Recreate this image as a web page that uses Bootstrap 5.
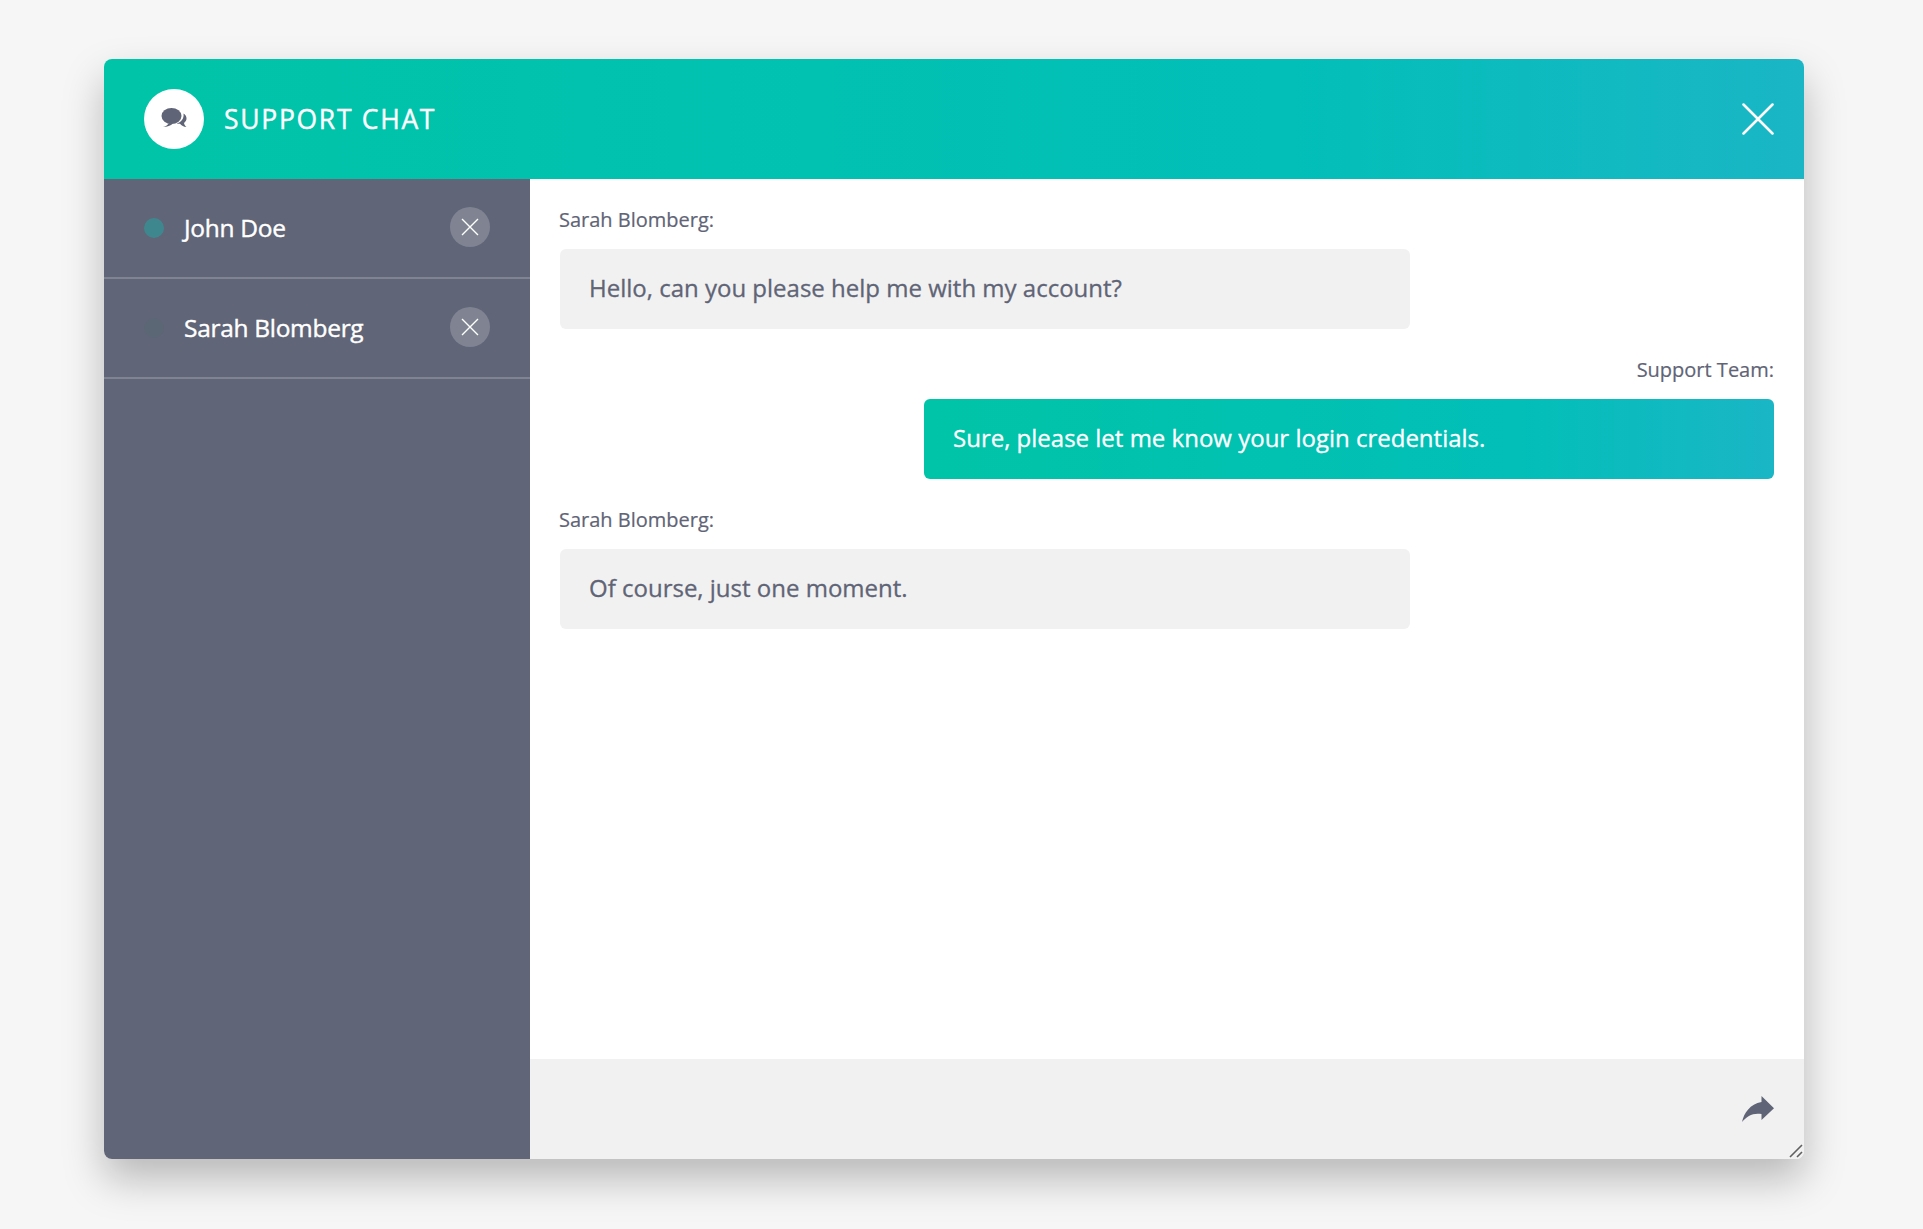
<!DOCTYPE html>
<html lang="en">
<head>
<meta charset="utf-8">
<title>Support Chat</title>
<link rel="stylesheet" href="https://cdn.jsdelivr.net/npm/bootstrap@5.3.0/dist/css/bootstrap.min.css">
<style>
html,body{height:100%}
body{background:#f6f6f6;font-family:"Open Sans","Liberation Sans",sans-serif;color:#5f6476;padding:59px 0 0 104px;overflow:hidden}
.chat-win{width:1700px;height:1100px;border-radius:8px;box-shadow:0 20px 40px rgba(0,0,0,.25);overflow:hidden;background:#fff;position:relative}
.chat-head{height:120px;padding:0 30px 0 40px;background:linear-gradient(90deg,#00c4a7 0%,#02bfb8 70%,#1ab6c6 100%);flex:none}
.head-logo{width:60px;height:60px;background:#fff;border-radius:50%}
.head-title{font-size:26.5px;letter-spacing:1.7px;margin-left:20px;color:#fff;line-height:1;-webkit-text-stroke:.4px #fff}
.chat-body{height:980px}
.chat-side{width:426px;background:#606577;flex:none}
.side-item{height:100px;border-bottom:2px solid #7f8392;padding:0 40px}
.side-dot{width:20px;height:20px;border-radius:50%;flex:none;margin-bottom:1px}
.dot-on{background:#3f878f}
.dot-off{background:#5b6775}
.side-name{font-size:24.5px;color:#fff;margin-left:20px;letter-spacing:-.3px;-webkit-text-stroke:.4px #fff}
.side-close{width:40px;height:40px;border-radius:50%;background:#7f8392;margin-bottom:2px}
.chat-main{min-width:0}
.chat-msgs{padding:27px 30px 0 29px}
.msg-who{font-size:20px;line-height:28px;margin-bottom:15px;-webkit-text-stroke:.2px currentColor}
.msg-bub{width:850px;height:80px;border-radius:6px;padding:0 30px 2px 29px;font-size:24px;margin-bottom:27px;-webkit-text-stroke:.3px currentColor}
.bub-in{background:#f1f1f1;margin-left:1px}
.bub-out{background:linear-gradient(90deg,#00c4a7,#02bfb8 70%,#1ab6c6);color:#fff}
.chat-input{height:100px;background:#f1f1f1;padding:0 30px;flex:none}
.chat-grip{position:absolute;right:0;bottom:0}
</style>
</head>
<body>
<div class="chat-win d-flex flex-column">
  <header class="chat-head d-flex align-items-center">
    <div class="head-logo d-flex align-items-center justify-content-center">
      <svg width="26" height="22" viewBox="0 0 26 22" fill="#5f6476"><ellipse cx="10.5" cy="8" rx="10" ry="8"/><path d="M2 19c2.500-.5 4.500-1.700 6-4l4 .5c-2.500 2.300-5.500 3.500-10 3.500z"/><path d="M22.500 5.500c2 1.300 3.200 3.200 3 5.300-.1 1.700-1 3.100-2.500 4.200.3 1.800 1.200 3 2.500 4-2.800-.2-5-1.200-6.500-3.300-1.200.1-2.400 0-3.500-.3 4.500-1 7.800-4.700 7-9.900z"/></svg>
    </div>
    <div class="head-title">SUPPORT CHAT</div>
    <svg class="ms-auto" width="32" height="32" viewBox="0 0 32 32" stroke="#fff" stroke-width="2.500" stroke-linecap="round"><path d="M1.500 1.500l29 29M30.500 1.500l-29 29"/></svg>
  </header>
  <div class="chat-body d-flex">
    <aside class="chat-side">
      <div class="side-item d-flex align-items-center">
        <span class="side-dot dot-on"></span>
        <span class="side-name">John Doe</span>
        <span class="side-close ms-auto d-flex align-items-center justify-content-center">
          <svg width="18" height="18" viewBox="0 0 18 18" stroke="#fff" stroke-width="1.400"><path d="M1 1l16 16M17 1L1 17"/></svg>
        </span>
      </div>
      <div class="side-item d-flex align-items-center">
        <span class="side-dot dot-off"></span>
        <span class="side-name">Sarah Blomberg</span>
        <span class="side-close ms-auto d-flex align-items-center justify-content-center">
          <svg width="18" height="18" viewBox="0 0 18 18" stroke="#fff" stroke-width="1.400"><path d="M1 1l16 16M17 1L1 17"/></svg>
        </span>
      </div>
    </aside>
    <main class="chat-main flex-grow-1 d-flex flex-column">
      <div class="chat-msgs flex-grow-1">
        <div class="msg-who">Sarah Blomberg:</div>
        <div class="msg-bub bub-in d-flex align-items-center">Hello, can you please help me with my account?</div>
        <div class="msg-who text-end">Support Team:</div>
        <div class="msg-bub bub-out d-flex align-items-center ms-auto">Sure, please let me know your login credentials.</div>
        <div class="msg-who">Sarah Blomberg:</div>
        <div class="msg-bub bub-in d-flex align-items-center">Of course, just one moment.</div>
      </div>
      <div class="chat-input d-flex align-items-center justify-content-end">
        <svg width="32" height="26" viewBox="0 0 32 26" fill="#5f6476"><path d="M19.500 0L32 12.300 19.500 24v-6C11 16.500 5 20 0 26 2 17 8 8 19.500 6z"/></svg>
      </div>
    </main>
  </div>
  <svg class="chat-grip" width="16" height="16" viewBox="0 0 16 16" stroke="#606060" stroke-width="1.600"><path d="M2 14L14 2M9 14l5-5"/></svg>
</div>
<script src="https://cdn.jsdelivr.net/npm/bootstrap@5.3.0/dist/js/bootstrap.bundle.min.js"></script>
</body>
</html>
